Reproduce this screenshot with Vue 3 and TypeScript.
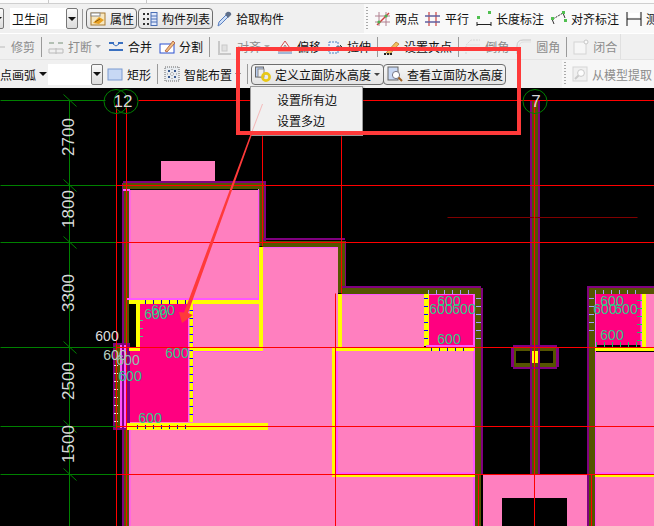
<script setup lang="ts">
type Item = {
  k: 'tool' | 'sep' | 'combo' | 'grip' | 'caret'
  gap?: number
  t?: string
  i?: string
  btn?: boolean
  off?: boolean
  arrow?: boolean
  w?: number
}
type Group = { cls: string; items: Item[] }

const I: Record<string, string> = {
  prop: '<rect x="1" y="2" width="14" height="12" fill="#f7e7c0" stroke="#a87a30"/><rect x="1" y="2" width="9" height="3" fill="#fff" stroke="#888"/><path d="M3 12 L9 6 L14 9 L9 13Z" fill="#e8a020"/><path d="M5 11 L10 8" stroke="#8a5a10"/>',
  list: '<g fill="#333"><rect x="1" y="2" width="2" height="2"/><rect x="5" y="2" width="2" height="2"/><rect x="1" y="7" width="2" height="2"/><rect x="5" y="7" width="2" height="2"/><rect x="1" y="12" width="2" height="2"/><rect x="5" y="12" width="2" height="2"/></g><rect x="9" y="1.5" width="6" height="13" fill="#dfe8fb" stroke="#4a6fb5"/><path d="M9 5H15M9 8H15M9 11H15" stroke="#4a6fb5"/>',
  pick: '<path d="M2 15 L3 11 L10 4 L12 6 L5 13Z" fill="#cfe0f8" stroke="#5a7fc0"/><path d="M9 3 L11 1 Q13 0 15 2 Q16 4 14 5 L12 7Z" fill="#5f6f8a"/>',
  two: '<path d="M4 1V15M11 1V15M0 5H15M0 11H15" stroke="#b08090"/><path d="M2 14 L14 2" stroke="#d04040" stroke-width="1.4"/><circle cx="4" cy="11" r="1.6" fill="#50b050"/><circle cx="11" cy="5" r="1.6" fill="#50b050"/>',
  par: '<path d="M4 1V15M11 1V15" stroke="#d05050" stroke-width="1.3"/><path d="M0 5H15M0 11H15" stroke="#6060a0" stroke-width="1.3"/>',
  len: '<path d="M1 11V15M15 11V15M1 13.5H15" stroke="#222"/><rect x="1" y="5" width="3" height="3" fill="#50c050"/><rect x="12" y="0" width="3" height="3" fill="#50c050"/>',
  ali: '<path d="M2 8 L12 2" stroke="#333" stroke-dasharray="2 1"/><path d="M3 13 L1 8M14 7L12 2" stroke="#333"/><rect x="0" y="6" width="3" height="3" fill="#50c050"/><rect x="13" y="8" width="3" height="3" fill="#50c050"/><rect x="11" y="0" width="3" height="3" fill="#50c050"/>',
  mea: '<path d="M1 1V15M15 1V15M1 8H15" stroke="#111"/><rect x="3" y="2" width="10" height="4" fill="#fff"/>',
  trim: '<path d="M0 8H14M8 3V13" stroke="#aaa"/>',
  brk: '<g fill="#9fb0a0"><rect x="1" y="3" width="5" height="2"/><rect x="10" y="3" width="5" height="2"/></g><path d="M1 10H15V14H1Z" fill="none" stroke="#aaa"/><path d="M8 9V15" stroke="#aaa"/>',
  mrg: '<g fill="#3a70c0"><rect x="1" y="3" width="5" height="2"/><rect x="10" y="3" width="5" height="2"/><rect x="1" y="10" width="14" height="2"/></g><path d="M8 7L5 5M8 7L11 5" stroke="#3a70c0"/>',
  spl: '<rect x="1" y="5" width="14" height="9" fill="#fff" stroke="#2a50d0"/><path d="M6 12 L14 2 L16 4 L8 13Z" fill="#f0c080" stroke="#a04020" stroke-width=".7"/>',
  aln: '<path d="M2 2V15H14" fill="none" stroke="#bbb" stroke-width="2"/><rect x="5" y="6" width="5" height="6" fill="#ddd" stroke="#bbb"/>',
  off: '<path d="M8 2 L15 12H1Z" fill="#f6f6f6" stroke="#d05050"/><path d="M1 14H15" stroke="#5080c0"/><path d="M8 6 L11 11H5Z" fill="#fff" stroke="#888"/>',
  str: '<rect x="2" y="3" width="9" height="11" fill="#eef3fb" stroke="#4a80c0" stroke-dasharray="2 1"/><path d="M9 8H15M13 6L15 8L13 10" stroke="#333" fill="none"/>',
  grp: '<path d="M2 14 L12 3 L15 5 L6 15Z" fill="#f0c060" stroke="#b07020" stroke-width=".7"/><path d="M0 15H8" stroke="#222" stroke-width="2" stroke-dasharray="2 1"/>',
  cha: '<path d="M1 15V6 L6 1H15" fill="none" stroke="#ccc" stroke-dasharray="2 1"/><path d="M1 6H15" stroke="#ddd"/>',
  rou: '<path d="M1 15V7 Q1 1 7 1H15" fill="none" stroke="#bbb"/><path d="M3 15V8 Q3 3 8 3H15" fill="none" stroke="#ddd"/>',
  clo: '<rect x="1" y="3" width="12" height="12" fill="#f8f8f8" stroke="#ccc"/><circle cx="13" cy="3" r="2" fill="#fff" stroke="#bbb"/>',
  rec: '<rect x="1" y="3" width="14" height="11" fill="#c7d8f4" stroke="#7a9ad0"/>',
  sma: '<rect x="1" y="1" width="14" height="14" fill="#e8ecf0" stroke="#666" stroke-dasharray="1 1"/><g fill="#3a5a90"><rect x="4" y="4" width="2" height="2"/><rect x="10" y="4" width="2" height="2"/><rect x="4" y="10" width="2" height="2"/><rect x="10" y="10" width="2" height="2"/></g><path d="M8 3V13M3 8H13" stroke="#888" stroke-dasharray="1 2"/>',
  def: '<rect x="0.5" y="1" width="8" height="10" fill="#b8cdf0" stroke="#666"/><rect x="3" y="3" width="6" height="8" fill="#eee" stroke="#888"/><circle cx="11" cy="11" r="3.6" fill="none" stroke="#e8c818" stroke-width="2.6"/>',
  see: '<rect x="1" y="1" width="10" height="13" fill="#c8d8f4" stroke="#666"/><circle cx="9" cy="9" r="3.6" fill="#fff" stroke="#778"/><path d="M11.5 11.5 L15 15" stroke="#a06020" stroke-width="2"/>',
  ext: '<rect x="1" y="1" width="14" height="14" fill="#eee" stroke="#ccc"/><circle cx="9" cy="7" r="3.4" fill="#fff" stroke="#bbb"/><path d="M6.5 9.5 L3 13" stroke="#bbb" stroke-width="2"/>',
}

const rows: { cls: string; groups: Group[] }[] = [
  {
    cls: 'r1',
    groups: [
      {
        cls: 'g-a',
        items: [
          { k: 'combo', gap: -10, w: 13, t: '' },
          { k: 'combo', gap: 7, w: 68, t: '卫生间' },
          { k: 'sep', gap: 4 },
          { k: 'tool', gap: 3, i: 'prop', t: '属性', btn: true },
          { k: 'tool', gap: 1, i: 'list', t: '构件列表', btn: true },
          { k: 'tool', gap: 3, i: 'pick', t: '拾取构件' },
        ],
      },
      {
        cls: 'g-b',
        items: [
          { k: 'grip', gap: 2 },
          { k: 'tool', gap: 7, i: 'two', t: '两点' },
          { k: 'tool', gap: 6, i: 'par', t: '平行' },
          { k: 'tool', gap: 7, i: 'len', t: '长度标注' },
          { k: 'tool', gap: 7, i: 'ali', t: '对齐标注' },
          { k: 'tool', gap: 7, i: 'mea', t: '测量' },
        ],
      },
    ],
  },
  {
    cls: 'r2',
    groups: [
      {
        cls: 'g-c',
        items: [
          { k: 'tool', gap: -9, i: 'trim', t: '修剪', off: true },
          { k: 'sep', gap: 6 },
          { k: 'tool', gap: 6, i: 'brk', t: '打断', off: true, arrow: true },
          { k: 'tool', gap: 7, i: 'mrg', t: '合并' },
          { k: 'tool', gap: 7, i: 'spl', t: '分割' },
          { k: 'sep', gap: 6 },
          { k: 'tool', gap: 7, i: 'aln', t: '对齐', off: true, arrow: true },
          { k: 'tool', gap: 7, i: 'off', t: '偏移' },
          { k: 'tool', gap: 6, i: 'str', t: '拉伸' },
          { k: 'sep', gap: 6 },
          { k: 'tool', gap: 6, i: 'grp', t: '设置夹点' },
          { k: 'sep', gap: 6 },
          { k: 'tool', gap: 6, i: 'cha', t: '倒角', off: true },
          { k: 'tool', gap: 7, i: 'rou', t: '圆角', off: true },
          { k: 'sep', gap: 6 },
          { k: 'tool', gap: 6, i: 'clo', t: '闭合', off: true },
        ],
      },
    ],
  },
  {
    cls: 'r3',
    groups: [
      {
        cls: 'g-d',
        items: [
          { k: 'tool', gap: 0, t: '点画弧' },
          { k: 'caret', gap: 3 },
          { k: 'combo', gap: 1, w: 55, t: '' },
          { k: 'tool', gap: 4, i: 'rec', t: '矩形' },
          { k: 'sep', gap: 6 },
          { k: 'tool', gap: 6, i: 'sma', t: '智能布置', arrow: true },
          { k: 'sep', gap: 6 },
          { k: 'tool', gap: 3, i: 'def', t: '定义立面防水高度', btn: true, arrow: true },
          { k: 'tool', gap: -1, i: 'see', t: '查看立面防水高度', btn: true },
        ],
      },
      {
        cls: 'g-e',
        items: [
          { k: 'grip', gap: 2 },
          { k: 'tool', gap: 6, i: 'ext', t: '从模型提取', off: true },
        ],
      },
    ],
  },
]

const PINK = '#ff7fbf'
const HOT = '#ff0080'
const YEL = '#ffff00'
const OLV = '#555500'
const PUR = '#800080'
const EDGE = '#ff55ff'
const r = (x: number, y: number, w: number, h: number, f: string) => ({ x, y, w, h, f })

const rects = [
  // room fills
  r(161, 161, 54, 20, PINK),
  r(130, 190, 129, 161, PINK),
  r(263, 247, 75, 104, PINK),
  r(342, 294, 82, 54, PINK),
  r(129, 351, 346, 175, PINK),
  r(483, 475, 104, 51, PINK),
  r(595, 352, 59, 174, PINK),
  r(646, 294, 8, 55, PINK),
  r(502, 498, 65, 28, '#000'),
  r(129, 304, 7, 43, '#000'),
  r(140, 304, 48, 46, HOT),
  r(127, 350, 61, 72, HOT),
  r(429, 294, 44, 52, HOT),
  r(595, 294, 47, 51, HOT),
  // outer left bay
  r(113, 343, 17, 87, PUR),
  r(115, 345, 5, 83, OLV),
  r(120, 345, 7, 83, EDGE),
  // walls
  r(122, 183, 2, 343, PUR),
  r(124, 183, 5, 160, OLV),
  r(124, 430, 5, 96, OLV),
  r(129, 190, 1.5, 110, EDGE),
  r(129, 430, 1.5, 96, EDGE),
  r(123, 181, 143, 2, PUR),
  r(123, 183, 143, 6, OLV),
  r(123, 189, 7, 2, EDGE),
  r(258, 189, 8, 2, EDGE),
  r(264, 183, 2, 58, PUR),
  r(259, 183, 5, 63, OLV),
  r(258, 190, 1.3, 110, EDGE),
  r(263, 238, 82, 2, PUR),
  r(263, 241, 82, 6, OLV),
  r(264, 247, 74, 1, EDGE),
  r(338, 241, 7, 52, OLV),
  r(345, 241, 1, 47, PUR),
  r(342, 286, 139, 2, PUR),
  r(342, 288, 139, 6, OLV),
  r(342, 294, 133, 1, EDGE),
  r(475, 288, 6, 238, OLV),
  r(481, 288, 2, 187, PUR),
  r(473, 294, 2, 232, EDGE),
  r(530, 100, 10, 245, PUR),
  r(530, 369, 10, 105, PUR),
  r(532, 100, 6, 245, OLV),
  r(532, 369, 6, 105, OLV),
  r(587, 286, 2, 240, PUR),
  r(589, 286, 65, 2, PUR),
  r(589, 288, 65, 6, OLV),
  r(589, 294, 6, 232, OLV),
  r(595, 294, 1, 232, EDGE),
  // column box
  r(511, 348, 48, 19, PUR),
  r(513, 345, 44, 24, PUR),
  r(514, 348, 42, 19, OLV),
  r(516, 351, 14, 12, '#000'),
  r(540, 351, 13, 12, '#000'),
  r(530, 345, 2, 24, PUR),
  r(538, 345, 2, 24, PUR),
  r(532, 351, 6, 12, YEL),
  // yellow bands
  r(127, 298, 135, 2, EDGE),
  r(129, 300, 134, 4, YEL),
  r(136, 304, 4, 47, YEL),
  r(129, 347, 11, 4, YEL),
  r(188, 304, 1.5, 118, EDGE),
  r(189.5, 304, 3.5, 118, YEL),
  r(193, 304, 1, 118, EDGE),
  r(193, 347, 70, 4, YEL),
  r(193, 351, 70, 1, EDGE),
  r(259, 247, 4, 104, YEL),
  r(127, 423, 141, 7, YEL),
  r(338, 294, 4, 54, YEL),
  r(332, 348, 142, 3, YEL),
  r(332, 351, 4, 123, YEL),
  r(336, 351, 2, 123, EDGE),
  r(332, 474, 143, 3, YEL),
  r(338, 472.5, 135, 1.5, EDGE),
  r(424, 294, 5, 52, YEL),
  r(642, 294, 4, 54, YEL),
  r(640.5, 294, 1.5, 54, EDGE),
  r(595, 348, 59, 3, YEL),
  r(595, 474, 59, 3, YEL),
  r(595, 472.5, 59, 1.5, EDGE),
  r(426, 345, 49, 2, EDGE),
]

const ticks: { x: number; y: number; w: number; h: number; f: string }[] = []
const vt = (x0: number, x1: number, h: number, y: number, f: string) => {
  for (let x = x0; x <= x1; x += 8) ticks.push(r(x, y, 1, h, f))
}
const ht = (y0: number, y1: number, w: number, x: number, f: string) => {
  for (let y = y0; y <= y1; y += 8) ticks.push(r(x, y, w, 1, f))
}
vt(145, 185, 4, 300, '#0000c0')
ht(310, 420, 3.5, 189.5, '#0000ff')
ht(320, 340, 3, 140, '#40d080')
vt(137, 185, 4, 425, '#0000c0')
ht(365, 425, 4, 114, '#e8e8e8')
vt(428, 473, 4, 290, '#a0a0ff')
ht(298, 342, 4, 424, '#0000ff')
ht(298, 345, 5, 476, '#a0a0ff')
vt(431, 470, 4, 347, '#0000c0')
vt(595, 641, 4, 290, '#a0a0ff')
ht(298, 335, 5, 589, '#a0a0ff')
ht(300, 340, 5, 637, '#20c060')
vt(596, 637, 5, 342, '#20c060')

const gridY = [185, 242, 347, 426, 474]
const reds = [
  [138, 100, 654, 100],
  ...gridY.map((y) => [116, y, 654, y]),
  [116, 104, 116, 526],
  [126, 104, 126, 526],
  [262, 100, 262, 246],
  [341, 100, 341, 293],
  [335, 293, 335, 526],
  [478, 474, 478, 526],
  [534, 100, 534, 526],
  [591, 474, 591, 526],
]
const greens = [
  [0, 100, 105, 100],
  ...gridY.map((y) => [0, y, 116, y]),
  [69, 100, 69, 526],
  ...[100, ...gridY].map((y) => [63, y - 6, 76, y + 6]),
]

const dims = [
  { t: '2700', y: 137 },
  { t: '1800', y: 209 },
  { t: '3300', y: 293 },
  { t: '2500', y: 381 },
  { t: '1500', y: 444 },
]
const labels = [
  { x: 163, y: 310 },
  { x: 156, y: 314 },
  { x: 177, y: 353 },
  { x: 130, y: 376 },
  { x: 150, y: 418 },
  { x: 449, y: 301 },
  { x: 441, y: 309 },
  { x: 464, y: 309 },
  { x: 449, y: 339 },
  { x: 612, y: 301 },
  { x: 605, y: 309 },
  { x: 626, y: 309 },
  { x: 612, y: 335 },
]
const greys = [
  { x: 107, y: 336, f: '#dddddd' },
  { x: 115, y: 355, f: '#b8d0c0' },
  { x: 128, y: 360, f: '#90c0b0' },
]
</script>

<template>
  <div class="page">
    <div class="top"></div>
    <div v-for="row in rows" :key="row.cls" class="row" :class="row.cls">
      <div v-for="g in row.groups" :key="g.cls" class="group" :class="g.cls">
        <template v-for="(it, n) in g.items" :key="n">
          <span v-if="it.k === 'sep'" class="sep" :style="{ marginLeft: it.gap + 'px' }"></span>
          <span v-else-if="it.k === 'grip'" class="grip" :style="{ marginLeft: it.gap + 'px' }"></span>
          <span v-else-if="it.k === 'caret'" class="caret big" :style="{ marginLeft: it.gap + 'px' }"></span>
          <div
            v-else-if="it.k === 'combo'"
            class="combo"
            :style="{ marginLeft: it.gap + 'px', width: it.w + 'px' }"
          >
            <span class="val">{{ it.t }}</span>
            <span class="drop"><span class="caret big"></span></span>
          </div>
          <div
            v-else
            class="tool"
            :class="{ btn: it.btn, off: it.off, arrowed: it.arrow }"
            :style="{ marginLeft: it.gap + 'px' }"
          >
            <svg v-if="it.i" class="ico" width="16" height="16" viewBox="0 0 16 16" v-html="I[it.i]"></svg>
            <span>{{ it.t }}</span>
            <span v-if="it.arrow" class="caret"></span>
          </div>
        </template>
      </div>
    </div>

    <svg class="canvas" width="654" height="438" viewBox="0 88 654 438">
      <rect v-for="(b, n) in rects" :key="'b' + n" :x="b.x" :y="b.y" :width="b.w" :height="b.h" :fill="b.f" />
      <rect v-for="(b, n) in ticks" :key="'t' + n" :x="b.x" :y="b.y" :width="b.w" :height="b.h" :fill="b.f" />
      <g transform="translate(0.5 0.5)">
        <line x1="447" y1="217" x2="637" y2="217" stroke="#800000" />
        <line
          v-for="(l, n) in greens"
          :key="'g' + n"
          :x1="l[0]"
          :y1="l[1]"
          :x2="l[2]"
          :y2="l[3]"
          stroke="#008000"
        />
        <line
          v-for="(l, n) in reds"
          :key="'r' + n"
          :x1="l[0]"
          :y1="l[1]"
          :x2="l[2]"
          :y2="l[3]"
          stroke="#ff0000"
        />
      </g>
      <g fill="none" stroke="#008000">
        <circle cx="116" cy="101.5" r="12" />
        <circle cx="126" cy="101.5" r="12" />
        <circle cx="535" cy="101.5" r="12" />
      </g>
      <text x="123" y="107" class="axis">12</text>
      <text x="536" y="107" class="axis">7</text>
      <text
        v-for="d in dims"
        :key="d.t"
        class="dim"
        :transform="`translate(68 ${d.y}) rotate(-90)`"
      >{{ d.t }}</text>
      <text v-for="(a, n) in greys" :key="'n' + n" class="six" :x="a.x" :y="a.y" :fill="a.f">600</text>
      <text v-for="(a, n) in labels" :key="'l' + n" class="six" :x="a.x" :y="a.y" fill="#30c888">600</text>
    </svg>

    <div class="menu">
      <div class="entry">设置所有边</div>
      <div class="entry">设置多边</div>
    </div>

    <svg class="mark" width="654" height="526" viewBox="0 0 654 526">
      <polygon points="262,104 263,104 252,133 251,133" fill="#ff3a3a" opacity="0.3" />
      <polygon points="251,133 252.5,133 188,313 193,315 182,323 179,312 184,312.5" fill="#ff3a3a" />
    </svg>
    <div class="redbox"></div>
  </div>
</template>

<style scoped>
.page {
  position: relative;
  width: 654px;
  height: 526px;
  overflow: hidden;
  background: #f0f0f0;
  font-family: "Noto Sans CJK SC", "Liberation Sans", sans-serif;
  font-size: 12px;
  color: #111;
}
.top {
  height: 3px;
  background-color: #fbfbfb;
  background-image: linear-gradient(#c8c8c8, #c8c8c8), linear-gradient(#c8c8c8, #c8c8c8);
  background-size: 1px 3px;
  background-position: 48px 0, 146px 0;
  background-repeat: no-repeat;
  border-bottom: 1px solid #cfcfcf;
}
.row {
  display: flex;
  justify-content: space-between;
  align-items: stretch;
}
.r1 { height: 29px; border-bottom: 1px solid #fff; }
.r2 { height: 25px; border-bottom: 1px solid #e4e4e4; }
.r3 { height: 28px; }
.group {
  display: flex;
  align-items: center;
  flex: none;
  white-space: nowrap;
}
.g-a { width: 287px; }
.g-b { width: 290px; background: #f9f9f9; overflow: hidden; }
.g-c { width: 620px; border-right: 1px solid #e0e0e0; }
.g-d { width: 505px; }
.g-e { width: 92px; overflow: hidden; background: #f7f7f7; }
.tool {
  display: flex;
  align-items: center;
  gap: 4px;
  height: 21px;
  line-height: 21px;
  flex: none;
  box-sizing: border-box;
}
.btn {
  padding: 0 2px 0 3px;
  border: 1px solid #6e6e6e;
  border-radius: 4px;
  background: linear-gradient(#f6f6f6, #e4e4e4);
}
.btn.arrowed { padding-right: 3px; }
.off { color: #8c8c8c; }
.off .ico { opacity: 0.75; }
.ico { flex: none; display: block; }
.sep {
  width: 1px;
  height: 20px;
  background: #9a9a9a;
  flex: none;
}
.grip {
  width: 2px;
  height: 24px;
  flex: none;
  background: repeating-linear-gradient(#aaa 0 1px, transparent 1px 3px);
}
.caret {
  width: 0;
  height: 0;
  margin-left: -1px;
  border-left: 3px solid transparent;
  border-right: 3px solid transparent;
  border-top: 3px solid #444;
  flex: none;
}
.off .caret { border-top-color: #aaa; }
.caret.big {
  margin-left: 0;
  border-left-width: 4px;
  border-right-width: 4px;
  border-top: 4px solid #111;
}
.combo {
  display: flex;
  align-items: center;
  height: 21px;
  flex: none;
  background: #fff;
}
.val {
  flex: 1;
  min-width: 0;
  padding-left: 2px;
}
.drop {
  width: 12px;
  height: 21px;
  box-sizing: border-box;
  border: 1px solid #777;
  border-radius: 2px;
  background: linear-gradient(#fafafa, #dcdcdc);
  display: flex;
  align-items: center;
  justify-content: center;
  flex: none;
}
.canvas {
  display: block;
  background: #000;
}
.axis {
  font-family: "Liberation Sans", sans-serif;
  font-size: 17px;
  fill: #d8d8d8;
  text-anchor: middle;
}
.dim {
  font-family: "Liberation Sans", sans-serif;
  font-size: 17px;
  fill: #d8d8d8;
  text-anchor: middle;
  dominant-baseline: central;
}
.six {
  font-family: "Liberation Sans", sans-serif;
  font-size: 14px;
  text-anchor: middle;
  dominant-baseline: central;
}
.menu {
  position: absolute;
  left: 250px;
  top: 86px;
  width: 113px;
  height: 50px;
  box-sizing: border-box;
  padding: 2px 0 0 26px;
  background: #f0f0f0;
  border: 1px solid #9a9a9a;
  box-shadow: 1px 1px 2px rgba(0, 0, 0, 0.3);
}
.entry {
  height: 21px;
  line-height: 21px;
  white-space: nowrap;
}
.mark {
  position: absolute;
  left: 0;
  top: 0;
  pointer-events: none;
}
.redbox {
  position: absolute;
  left: 236px;
  top: 47px;
  width: 285px;
  height: 88px;
  box-sizing: border-box;
  border: 4px solid #ff3a3a;
  pointer-events: none;
}
</style>
